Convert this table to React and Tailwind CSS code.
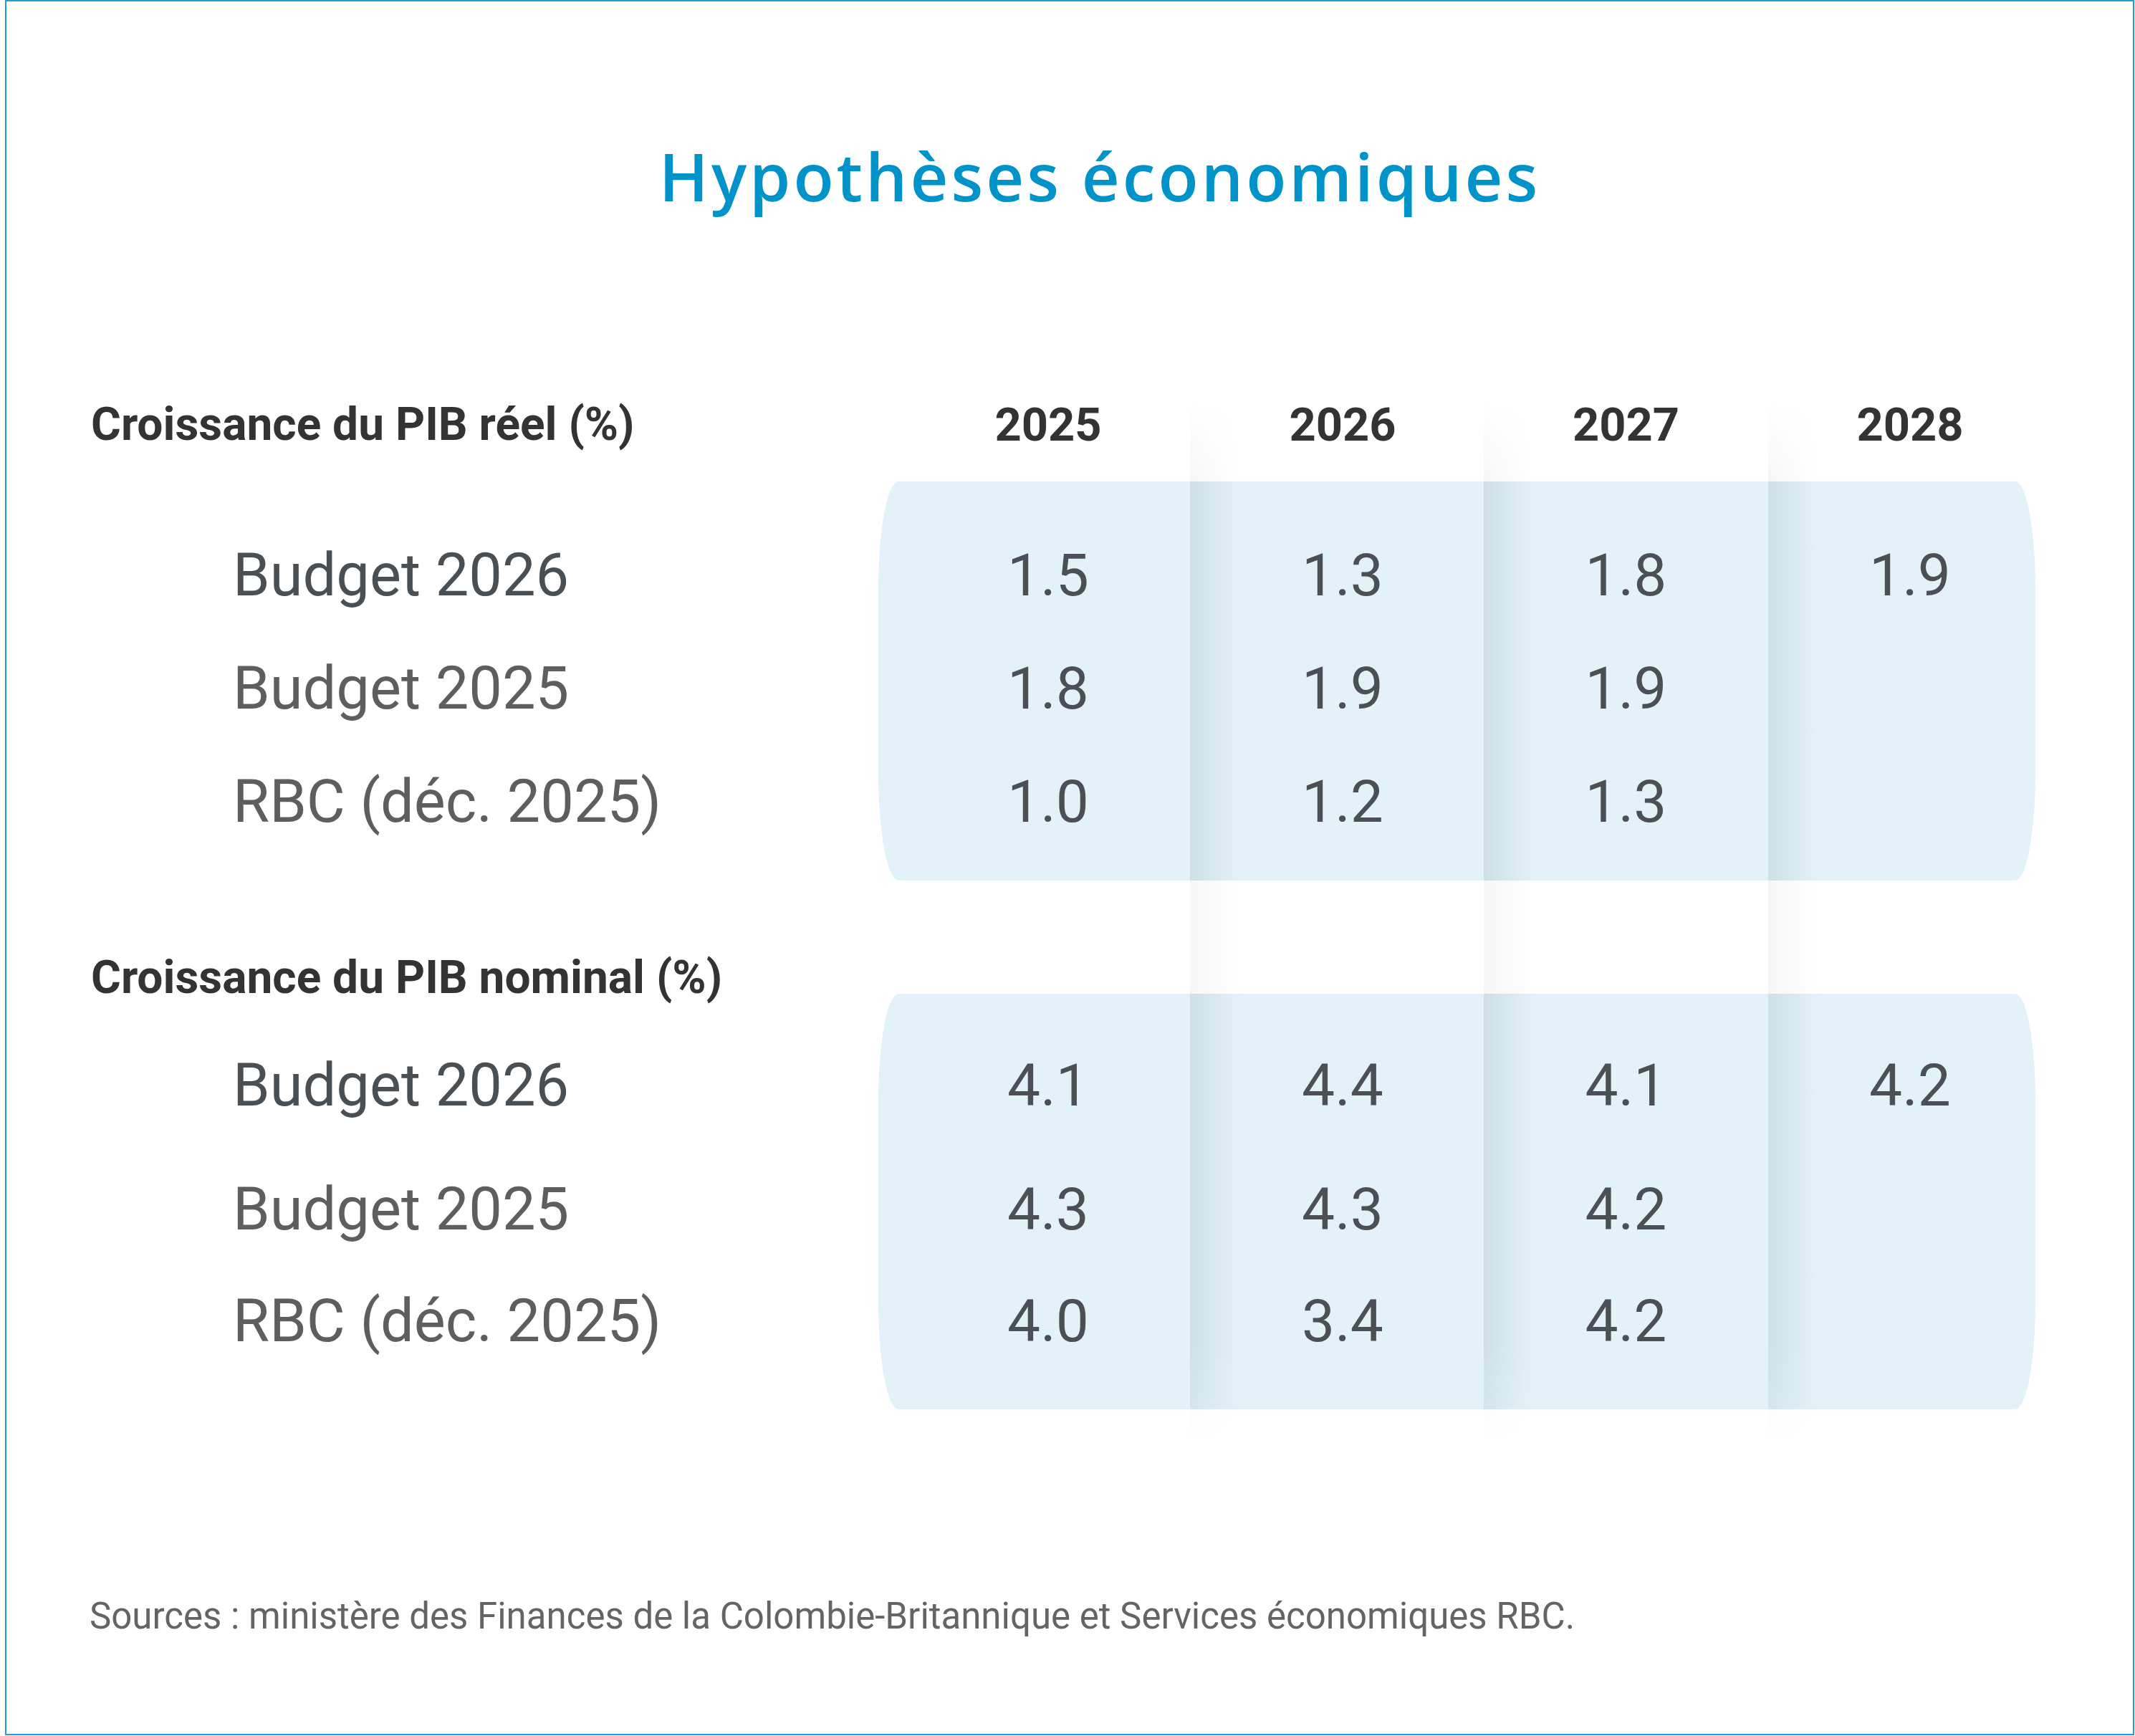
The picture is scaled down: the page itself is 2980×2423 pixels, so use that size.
import React from "react";

const years = ["2025", "2026", "2027", "2028"];

const sections = [
  {
    title: "Croissance du PIB réel (%)",
    height: "h-[557px]",
    pad: "pt-[52px]",
    rows: [
      { label: "Budget 2026", h: "h-[158px]", values: ["1.5", "1.3", "1.8", "1.9"] },
      { label: "Budget 2025", h: "h-[158px]", values: ["1.8", "1.9", "1.9", ""] },
      { label: "RBC (déc. 2025)", h: "h-[158px]", values: ["1.0", "1.2", "1.3", ""] },
    ],
  },
  {
    title: "Croissance du PIB nominal (%)",
    height: "h-[580px]",
    pad: "pt-[49px]",
    rows: [
      { label: "Budget 2026", h: "h-[173px]", values: ["4.1", "4.4", "4.1", "4.2"] },
      { label: "Budget 2025", h: "h-[156px]", values: ["4.3", "4.3", "4.2", ""] },
      { label: "RBC (déc. 2025)", h: "h-[156px]", values: ["4.0", "3.4", "4.2", ""] },
    ],
  },
];

// column widths inside the blue panel, and the nudge that centres the text
const cols = [
  { w: "w-[435px]", pad: "pl-[39px]", shade: "" },
  { w: "w-[410px]", pad: "pl-[16px]", shade: "bg-[linear-gradient(90deg,rgba(60,100,125,0.07),rgba(60,100,125,0.03)_40px,rgba(60,100,125,0)_75px)]" },
  { w: "w-[397px]", pad: "", shade: "bg-[linear-gradient(90deg,rgba(60,100,125,0.07),rgba(60,100,125,0.03)_40px,rgba(60,100,125,0)_75px)]" },
  { w: "w-[373px]", pad: "pl-[23px]", shade: "bg-[linear-gradient(90deg,rgba(60,100,125,0.07),rgba(60,100,125,0.03)_40px,rgba(60,100,125,0)_75px)]" },
];

const labelColor = (i) => (i === 0 ? "text-[#4a4f53]" : "text-[#5e5e5e]");

const Panel = ({ section }) => {
  return (
    <div className="flex">
      <div className={`w-[1217px] shrink-0 pl-[316px] ${section.pad}`}>
        {section.rows.map((r, i) => (
          <div key={i} className={`${r.h} leading-[158px] text-[83px] ${labelColor(i)} whitespace-nowrap`}>
            {r.label}
          </div>
        ))}
      </div>
      <div className={`flex w-[1615px] ${section.height} bg-[#e3f2f8] overflow-hidden [border-radius:28px/150px]`}>
        {cols.map((c, ci) => (
          <div key={ci} className={`${c.w} ${c.pad} ${c.shade} ${section.pad} h-full`}>
            {section.rows.map((r, i) => (
              <div key={i} className={`${r.h} leading-[158px] text-[82px] text-center text-[#4b5055]`}>
                {r.values[ci]}
              </div>
            ))}
          </div>
        ))}
      </div>
    </div>
  );
};

const Shadow = ({ left }) => (
  <div
    className={`absolute top-[558px] h-[1460px] w-[80px] ${left} bg-[linear-gradient(90deg,rgba(0,0,0,0.035),rgba(0,0,0,0)_70px)] [mask-image:linear-gradient(to_bottom,transparent,black_8%,black_90%,transparent)]`}
  />
);

const App = () => {
  return (
    <div className="w-[2980px] h-[2423px] bg-white relative font-['Roboto',sans-serif]">
      <div className="ml-[7px] w-[2972px] h-[2422px] border-2 border-[#1a9fd8] flex flex-col">
        <div className="pt-[194px] pl-[84px] flex justify-center">
          <h1 className="font-['Open_Sans',sans-serif] font-semibold text-[92px] leading-[100px] text-[#0093c9] tracking-[4px]">
            Hypothèses économiques
          </h1>
        </div>

        <div className="mt-[258px] flex h-[78px] leading-[78px] text-[65px] font-bold text-[#333333] mb-[40px]">
          <div className="w-[1217px] shrink-0 pl-[118px] whitespace-nowrap text-[64px]">{sections[0].title}</div>
          <div className="flex w-[1615px]">
            {cols.map((c, ci) => (
              <div key={ci} className={`${c.w} ${c.pad} text-center`}>
                {years[ci]}
              </div>
            ))}
          </div>
        </div>

        <Panel section={sections[0]} />

        <div className="mt-[97px] h-[61px] leading-[78px] text-[64px] font-bold text-[#333333] pl-[118px] whitespace-nowrap">
          {sections[1].title}
        </div>

        <Panel section={sections[1]} />

        <div className="mt-[259px] pl-[116px] text-[51px] leading-[60px] text-[#646464] whitespace-nowrap">
          Sources : ministère des Finances de la Colombie-Britannique et Services économiques RBC.
        </div>
      </div>

      <Shadow left="left-[1661px]" />
      <Shadow left="left-[2071px]" />
      <Shadow left="left-[2468px]" />
    </div>
  );
};

export default App;
